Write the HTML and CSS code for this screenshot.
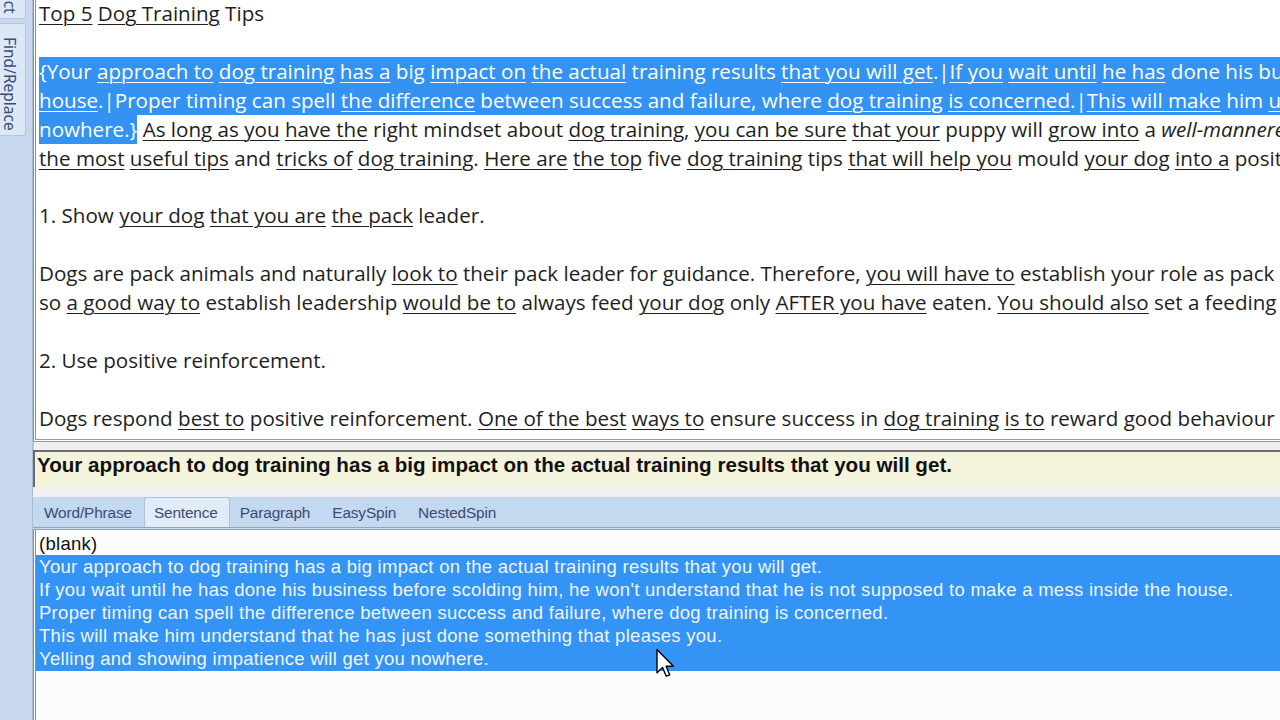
FILE: index.html
```html
<!DOCTYPE html>
<html>
<head>
<meta charset="utf-8">
<link rel="stylesheet" href="styles.css">
</head>
<body>
<div class="app">
  <aside class="sidebar">
    <div class="vtab vtab-cut">Spin Select</div>
    <div class="vtab">Find/Replace</div>
  </aside>
  <main class="main">
    <section class="editor">
      <div class="ln"><u>Top 5</u> <u>Dog Training</u> Tips</div>
      <div class="ln">&nbsp;</div>
      <div class="ln"><span class="sel full">{Your <u>approach to</u> <u>dog training</u> <u>has a</u> big <u>impact on</u> <u>the actual</u> training results <u>that you will get</u>.|<u>If you</u> <u>wait until</u> <u>he has</u> done his business before scolding him</span></div>
      <div class="ln"><span class="sel full"><u>house</u>.|Proper timing can spell <u>the difference</u> between success and failure, where <u>dog training</u> <u>is concerned</u>.|<u>This will make</u> him <u>understand</u> that he has</span></div>
      <div class="ln"><span class="sel">nowhere.}</span> <u>As long as you</u> <u>have the</u> right mindset about <u>dog training</u>, <u>you can be sure</u> <u>that your</u> puppy will <u>grow into</u> a <i>well-mannered</i> dog</div>
      <div class="ln"><u>the most</u> <u>useful tips</u> and <u>tricks of</u> <u>dog training</u>. <u>Here are</u> <u>the top</u> five <u>dog training</u> tips <u>that will help you</u> mould <u>your dog</u> <u>into a</u> positive</div>
      <div class="ln">&nbsp;</div>
      <div class="ln">1. Show <u>your dog</u> <u>that you are</u> <u>the pack</u> leader.</div>
      <div class="ln">&nbsp;</div>
      <div class="ln">Dogs are pack animals and naturally <u>look to</u> their pack leader for guidance. Therefore, <u>you will have to</u> establish your role as pack leader</div>
      <div class="ln">so <u>a good way to</u> establish leadership <u>would be to</u> always feed <u>your dog</u> only <u>AFTER you have</u> eaten. <u>You should also</u> set a feeding time</div>
      <div class="ln">&nbsp;</div>
      <div class="ln">2. Use positive reinforcement.</div>
      <div class="ln">&nbsp;</div>
      <div class="ln">Dogs respond <u>best to</u> positive reinforcement. <u>One of the best</u> <u>ways to</u> ensure success in <u>dog training</u> <u>is to</u> reward good behaviour with</div>
    </section>
    <div class="strip"></div>
    <div class="current">Your approach to dog training has a big impact on the actual training results that you will get.</div>
    <div class="strip2"></div>
    <nav class="tabs">
      <span class="tab">Word/Phrase</span>
      <span class="tab active">Sentence</span>
      <span class="tab">Paragraph</span>
      <span class="tab">EasySpin</span>
      <span class="tab">NestedSpin</span>
    </nav>
    <section class="list">
      <div class="item">(blank)</div>
      <div class="selblock">
        <div class="item">Your approach to dog training has a big impact on the actual training results that you will get.</div>
        <div class="item">If you wait until he has done his business before scolding him, he won't understand that he is not supposed to make a mess inside the house.</div>
        <div class="item">Proper timing can spell the difference between success and failure, where dog training is concerned.</div>
        <div class="item">This will make him understand that he has just done something that pleases you.</div>
        <div class="item">Yelling and showing impatience will get you nowhere.</div>
      </div>
    </section>
  </main>
</div>
<svg class="cursor" width="21" height="31" viewBox="0 0 13 20">
  <path d="M1 1 L1 16 L4.6 12.6 L7 18.2 L9.2 17.3 L6.9 11.8 L11.6 11.8 Z" fill="#fff" stroke="#000" stroke-width="0.9" stroke-linejoin="round"/>
</svg>
</body>
</html>
```
FILE: styles.css
```css
html, body {
  margin: 0;
  padding: 0;
  width: 1280px;
  height: 720px;
  overflow: hidden;
  background: #fff;
}
.app {
  display: flex;
  width: 1280px;
  height: 720px;
}
.sidebar {
  width: 32px;
  flex: none;
  background: #c7d8ee;
  display: flex;
  flex-direction: column;
  gap: 4px;
  overflow: hidden;
  border-right: 1px solid #a9bcd6;
}
.vtab {
  writing-mode: vertical-rl;
  width: 26px;
  background: #dde8f6;
  border: 1px solid #b4c6de;
  border-left: none;
  border-radius: 0 3px 3px 0;
  font-family: "Noto Sans", "Open Sans", sans-serif;
  font-size: 15.5px;
  color: #3b4d78;
  padding: 13px 7px 5px 0;
  line-height: 17px;
  text-align: center;
  box-sizing: border-box;
}
.vtab-cut {
  margin-top: -72px;
  padding: 6px 7px 4px 0;
}
.main {
  flex: 1;
  display: flex;
  flex-direction: column;
  min-width: 0;
}
.editor {
  height: 443px;
  flex: none;
  box-sizing: border-box;
  border-left: 3px double #8d8d8d;
  border-bottom: 3px double #9a9a9a;
  padding: 0 0 0 3px;
  overflow: hidden;
  font-family: "Open Sans", "Noto Sans", sans-serif;
  font-size: 20.6px;
  color: #1e1e1e;
  margin-top: -1px;
}
.ln {
  white-space: nowrap;
  line-height: 28.93px;
  height: 28.93px;
}
.ln u {
  text-decoration: underline;
  text-decoration-thickness: 1px;
  text-underline-offset: 3px;
}
.ln i { font-style: italic; }
.sel {
  background: #3493f2;
  color: #fff;
  display: inline-block;
  height: 28.93px;
}
.sel.full { padding-right: 400px; }
.strip {
  height: 8px;
  flex: none;
  background: #efefef;
  border-left: 1px solid #c8c8c8;
}
.current {
  height: 37px;
  flex: none;
  box-sizing: border-box;
  background: #f4f3dc;
  border-top: 2px solid #6b6b6b;
  border-left: 2px solid #6b6b6b;
  font-family: "Liberation Sans", Arial, sans-serif;
  font-weight: bold;
  font-size: 20.6px;
  line-height: 26px;
  color: #111;
  padding: 0 0 0 2px;
  white-space: nowrap;
  overflow: hidden;
}
.strip2 {
  height: 10px;
  flex: none;
  background: #f1f1f1;
}
.tabs {
  height: 33px;
  flex: none;
  box-sizing: border-box;
  background: #c4d8ef;
  border-bottom: 3px double #9aa3ad;
  display: flex;
  align-items: stretch;
  padding-left: 0;
}
.tab {
  font-family: "Liberation Sans", Arial, sans-serif;
  font-size: 15.4px;
  letter-spacing: -0.15px;
  color: #3c4b73;
  padding: 6px 11px 0 9px;
  box-sizing: border-box;
  border: 1px solid transparent;
  border-bottom: none;
}
.tab:first-child { padding-left: 10px; }
.tab.active {
  background: #e2ecf8;
  border-color: #adc1dc;
  border-radius: 3px 3px 0 0;
}
.list {
  flex: 1;
  background: #fbfdfd;
  border-left: 3px double #8d8d8d;
  padding-top: 2px;
  font-family: "Liberation Sans", Arial, sans-serif;
  font-size: 18.5px;
  letter-spacing: 0.28px;
  overflow: hidden;
}
.item {
  white-space: nowrap;
  line-height: 23px;
  height: 23px;
  padding-left: 3px;
  color: #111;
}
.selblock {
  background: #3394f5;
  padding-bottom: 1px;
}
.selblock .item { color: #eef5ff; }
.cursor {
  position: absolute;
  left: 655px;
  top: 648px;
}
```
